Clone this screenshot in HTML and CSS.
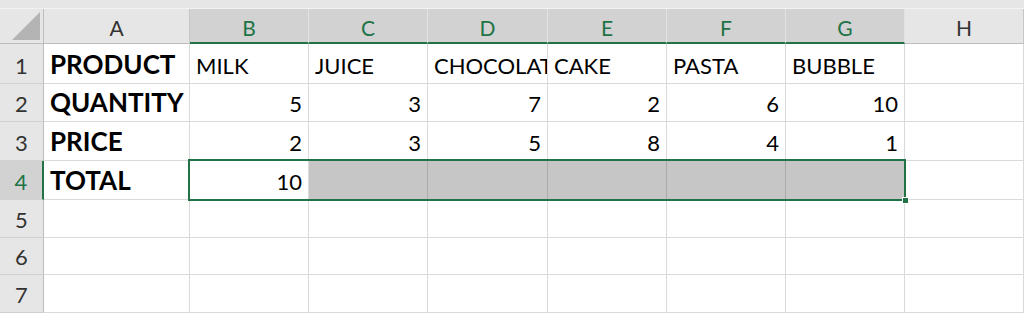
FILE: index.html
```html
<!DOCTYPE html>
<html lang="en">
<head>
    <meta charset="UTF-8">
    <title>Sheet1</title>
    <link rel="stylesheet" href="styles.css">
</head>
<body>

    <!-- Strip above the column headers -->
    <div class="top-strip"></div>

    <div class="sheet">
        <!-- Column headers -->
        <div class="corner">
            <svg width="30" height="30" viewBox="0 0 30 30"><polygon points="29,1 29,29 1,29" fill="#b4b4b4"/></svg>
        </div>
        <div class="col-head">A</div>
        <div class="col-head active">B</div>
        <div class="col-head active">C</div>
        <div class="col-head active">D</div>
        <div class="col-head active">E</div>
        <div class="col-head active">F</div>
        <div class="col-head active">G</div>
        <div class="col-head">H</div>

        <!-- Row 1 -->
        <div class="row-head">1</div>
        <div class="cell label">PRODUCT</div>
        <div class="cell">MILK</div>
        <div class="cell">JUICE</div>
        <div class="cell">CHOCOLATE</div>
        <div class="cell">CAKE</div>
        <div class="cell">PASTA</div>
        <div class="cell">BUBBLE</div>
        <div class="cell"></div>

        <!-- Row 2 -->
        <div class="row-head">2</div>
        <div class="cell label">QUANTITY</div>
        <div class="cell num">5</div>
        <div class="cell num">3</div>
        <div class="cell num">7</div>
        <div class="cell num">2</div>
        <div class="cell num">6</div>
        <div class="cell num">10</div>
        <div class="cell"></div>

        <!-- Row 3 -->
        <div class="row-head">3</div>
        <div class="cell label">PRICE</div>
        <div class="cell num">2</div>
        <div class="cell num">3</div>
        <div class="cell num">5</div>
        <div class="cell num">8</div>
        <div class="cell num">4</div>
        <div class="cell num">1</div>
        <div class="cell"></div>

        <!-- Row 4 (selected range B4:G4) -->
        <div class="row-head active">4</div>
        <div class="cell label">TOTAL</div>
        <div class="cell num">10</div>
        <div class="cell sel"></div>
        <div class="cell sel"></div>
        <div class="cell sel"></div>
        <div class="cell sel"></div>
        <div class="cell sel"></div>
        <div class="cell"></div>

        <!-- Empty rows -->
        <div class="row-head">5</div>
        <div class="cell"></div><div class="cell"></div><div class="cell"></div><div class="cell"></div>
        <div class="cell"></div><div class="cell"></div><div class="cell"></div><div class="cell"></div>

        <div class="row-head">6</div>
        <div class="cell"></div><div class="cell"></div><div class="cell"></div><div class="cell"></div>
        <div class="cell"></div><div class="cell"></div><div class="cell"></div><div class="cell"></div>

        <div class="row-head">7</div>
        <div class="cell"></div><div class="cell"></div><div class="cell"></div><div class="cell"></div>
        <div class="cell"></div><div class="cell"></div><div class="cell"></div><div class="cell"></div>

        <!-- Selection outline, laid over B4:G4 -->
        <div class="selection"><span class="handle"></span></div>
    </div>

</body>
</html>
```

FILE: styles.css
```css
/* Page */
body {
    margin: 0;
    background-color: #fff;
    font-family: Lato, "Liberation Sans", sans-serif;
    color: #000;
    overflow: hidden;
}

/* Thin strip above the headers */
.top-strip {
    height: 9px;
    background-color: #e6e6e6;
    border-bottom: 1px solid #f2f2f2;
    box-sizing: border-box;
}

/* Sheet grid */
.sheet {
    position: relative;
    display: grid;
    grid-template-columns: 44px 146px 119px 119px 120px 119px 119px 119px 1fr;
    grid-template-rows: 35px 40px 38px 39px 39px 38px 37px 38px;
}

.sheet > div {
    box-sizing: border-box;
    min-width: 0;
}

/* Top-left corner */
.corner {
    background-color: #e6e6e6;
    border-right: 1px solid #bdbdbd;
    border-bottom: 1px solid #bdbdbd;
    display: flex;
    align-items: flex-end;
    justify-content: flex-end;
    padding: 0 2px 2px 0;
}

.corner svg {
    display: block;
}

/* Column headers */
.col-head {
    background-color: #e6e6e6;
    border-right: 1px solid #c6c6c6;
    border-bottom: 1px solid #bdbdbd;
    color: #333;
    font-size: 21px;
    line-height: 1;
    display: flex;
    align-items: flex-end;
    justify-content: center;
    padding-bottom: 5px;
}

.col-head.active {
    background-color: #d2d2d2;
    color: #217346;
    border-right-color: #e2e2e2;
    border-bottom: 2px solid #217346;
    padding-bottom: 4px;
}

/* Row headers */
.row-head {
    background-color: #e6e6e6;
    border-right: 1px solid #bdbdbd;
    border-bottom: 1px solid #d0d0d0;
    color: #333;
    font-size: 22px;
    line-height: 1;
    display: flex;
    align-items: flex-end;
    justify-content: center;
    padding-bottom: 6px;
}

.row-head.active {
    background-color: #d2d2d2;
    color: #217346;
    border-right: 2px solid #217346;
}

/* Cells */
.cell {
    border-right: 1px solid #dadada;
    border-bottom: 1px solid #dadada;
    font-size: 22px;
    line-height: 1;
    white-space: nowrap;
    overflow: hidden;
    display: flex;
    align-items: flex-end;
    padding: 0 6px 6px 6px;
}

.cell.label {
    font-weight: bold;
    font-size: 26px;
}

.cell.num {
    justify-content: flex-end;
}

.cell.sel {
    background-color: #c6c6c6;
    border-right-color: #ababab;
}

/* Selection outline over B4:G4 */
.selection {
    position: absolute;
    grid-column: 3 / 9;
    grid-row: 5 / 6;
    top: -2px;
    right: -1px;
    bottom: -1px;
    left: -2px;
    border: 2px solid #217346;
    pointer-events: none;
}

.selection .handle {
    position: absolute;
    right: -5px;
    bottom: -5px;
    width: 7px;
    height: 7px;
    background-color: #217346;
    border: 1px solid #fff;
    box-sizing: border-box;
}
```
